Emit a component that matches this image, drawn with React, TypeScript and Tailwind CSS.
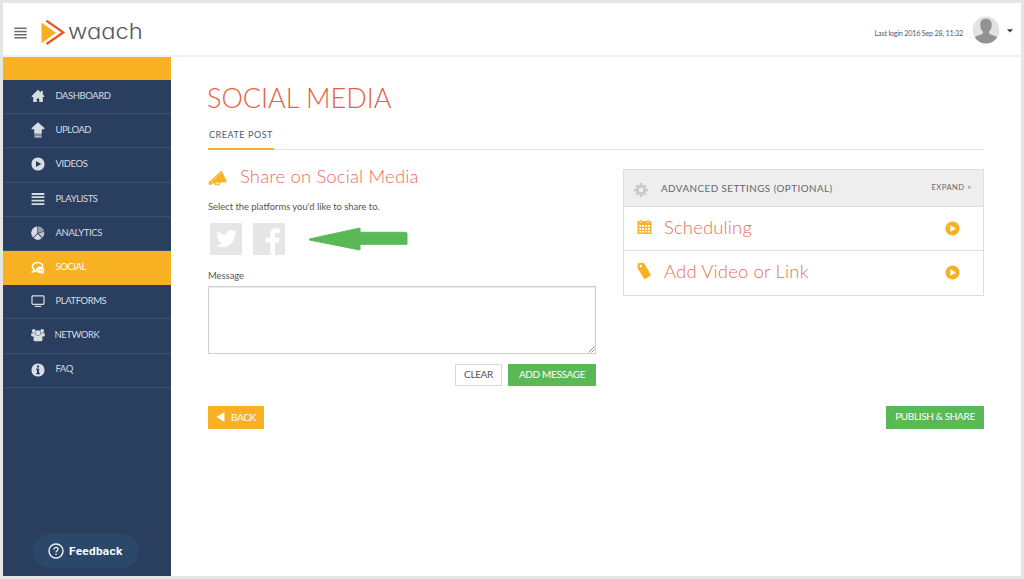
import React from 'react';
import { FaTwitter } from 'react-icons/fa';

const ic = 'h-[14px] w-[14px] shrink-0';

const HomeIcon = () => (
  <svg viewBox="0 0 14 14" className={ic} fill="currentColor">
    <path d="M7 .8.4 7.200l.8.9 1-.1V13h3.600V9.400h2.400V13h3.600V8l1 .1.8-.9-1.800-1.800V2H9.800v1.400z" />
  </svg>
);
const UploadIcon = () => (
  <svg viewBox="0 0 14 16" className="h-4 w-[14px] shrink-0" fill="currentColor">
    <path d="M7 .2.6 6v1.200h2.600v4.600h7.600V7.200h2.600V6zM3.400 12.500h7.200v1H3.400zM3.400 14.300h7.200v1.200H3.400z" />
  </svg>
);
const PlayIcon = ({ className = ic }: { className?: string }) => (
  <svg viewBox="0 0 14 14" className={className} fill="currentColor">
    <path fillRule="evenodd" d="M7 .4a6.600 6.600 0 1 0 0 13.200A6.600 6.600 0 0 0 7 .4zM5 3.900 10.300 7 5 10.100z" />
  </svg>
);
const ListIcon = () => (
  <svg viewBox="0 0 14 14" className={ic} fill="currentColor">
    <path d="M.6 1h12.800v2H.6zM.6 4.300h12.800v1.800H.6zM.6 7.700h12.800v1.800H.6zM.6 11.200h12.800v1.800H.6z" />
  </svg>
);
const PieIcon = () => (
  <svg viewBox="0 0 14 14" className={ic} fill="currentColor">
    <path d="M6.300.6V7.200L1.900 11.400A6.500 6.500 0 0 1 6.300.6z" />
    <path d="M6.700 7.900 2.500 12.100a6.500 6.500 0 0 0 8.300.2z" />
    <path opacity=".6" d="M6.900.5v6.200l6.200-1.500A6.500 6.500 0 0 0 6.900.5z" />
    <path opacity=".85" d="m13.300 5.800-5.900 1.500 4 4.400a6.500 6.500 0 0 0 1.900-5.900z" />
  </svg>
);
const ChatIcon = () => (
  <svg viewBox="0 0 14 14" className={ic}>
    <path d="M11.800 5.600C11.800 3.200 9.500 1.500 6.700 1.500S1.400 3.200 1.400 5.500c0 1.400.8 2.500 2 3.200-.1.8-.7 1.500-1.500 2 1.400 0 2.400-.5 3-1.300" fill="none" stroke="currentColor" strokeWidth="1.600" />
    <path d="M9.200 5.600C6.800 5.600 5 7 5 8.900s1.800 3.300 4.200 3.300l1-.1c.8.700 1.800 1 2.800.9-.5-.5-.8-1-.8-1.700.8-.6 1.200-1.500 1.200-2.400 0-1.900-1.800-3.300-4.200-3.300z" fill="currentColor" />
    <path d="M6.900 8.500h1v1h-1zM8.900 8.500h1v1h-1zM10.900 8.500h1v1h-1z" fill="#f7b122" />
  </svg>
);
const ScreenIcon = () => (
  <svg viewBox="0 0 14 14" className={ic}>
    <rect x="1" y="1.800" width="12" height="8.600" rx=".8" fill="none" stroke="currentColor" strokeWidth="1.200" />
    <path d="M3.800 11.800h6.400v1.200H3.800z" fill="currentColor" />
  </svg>
);
const PeopleIcon = () => (
  <svg viewBox="0 0 14 14" className={ic} fill="currentColor">
    <circle cx="2.800" cy="3" r="1.900" />
    <circle cx="11.200" cy="3" r="1.900" />
    <path d="M.2 5.200h4.200v3.300H1.200Q.2 8.500.2 7.300zM13.800 5.200H9.600v3.300h3.200q1 0 1-1.200z" />
    <circle cx="7" cy="4.800" r="2.600" />
    <path d="M4.600 6.800Q7 8.600 9.400 6.800q2.100.8 2.100 3.700v1.300q0 1.400-1.400 1.400H3.900q-1.400 0-1.400-1.400v-1.300q0-2.900 2.100-3.700z" />
  </svg>
);
const InfoIcon = () => (
  <svg viewBox="0 0 14 14" className={ic} fill="currentColor">
    <path fillRule="evenodd" d="M7 .4a6.600 6.600 0 1 0 0 13.200A6.600 6.600 0 0 0 7 .4zM6 2.400h2.100v2H6zM5.100 5.500h3v4.600h.8v1.200H5.100v-1.200h.9V6.700h-.9z" />
  </svg>
);

const items = [
  { label: 'DASHBOARD', icon: <HomeIcon />, cls: 'tracking-[-0.45px]' },
  { label: 'UPLOAD', icon: <UploadIcon />, cls: 'tracking-[-0.45px]' },
  { label: 'VIDEOS', icon: <PlayIcon />, cls: 'tracking-[-0.4px]' },
  { label: 'PLAYLISTS', icon: <ListIcon />, cls: 'tracking-[-0.4px]' },
  { label: 'ANALYTICS', icon: <PieIcon />, cls: 'tracking-[-0.35px]' },
  { label: 'SOCIAL', icon: <ChatIcon />, cls: 'tracking-[-0.45px]', active: true },
  { label: 'PLATFORMS', icon: <ScreenIcon />, cls: 'tracking-[-0.45px]' },
  { label: 'NETWORK', icon: <PeopleIcon />, cls: 'tracking-[-0.45px] -ml-px' },
  { label: 'FAQ', icon: <InfoIcon />, cls: 'tracking-[-0.45px]' },
];

function Header() {
  return (
    <header className="flex h-[54px] shrink-0 items-center border-b-2 border-[#f1f1f1] pl-[11px] pr-[8px]">
      <svg viewBox="0 0 13 12" className="mt-[8px] h-3 w-[13px]" fill="#6c6c6c">
        <path d="M.3.600h12.400v1.500H.3zM.3 3.700h12.400v1.500H.3zM.3 6.900h12.400v1.500H.3zM.3 10h12.400v1.500H.3z" />
      </svg>
      <svg viewBox="0 0 25 27" className="ml-[14px] mt-[7px] h-[27px] w-[25px]">
        <path d="M.5 3.500v20.700L15 13.700z" fill="#f8b01f" />
        <path d="M5.500 1.800 22.200 13.400 5.500 25" fill="none" stroke="#e8532a" strokeWidth="2.300" />
      </svg>
      <span className="ml-[2px] mt-[3px] origin-left scale-x-[1.08] font-['Inter'] text-[22px] font-light leading-[28px] tracking-[0px] text-[#575757] [font-feature-settings:'cv11']">waach</span>
      <span className="ml-auto mt-[9px] text-[7.300px] leading-[10px] tracking-[-0.25px] text-[#555b6b]">Last login 2016 Sep 28, 11:32</span>
      <svg viewBox="0 0 28 28" className="ml-[9px] mt-[2px] h-7 w-7">
        <defs>
          <clipPath id="avatar"><circle cx="14" cy="14" r="13.400" /></clipPath>
        </defs>
        <g clipPath="url(#avatar)">
          <rect width="28" height="28" fill="#e2e2e2" />
          <path d="M14 2.800c-4.200 0-6 2.700-5.700 6.600.1 2.600 1 4.600 2.600 6v2c-1.500 1.800-7.200 1.600-9.300 5V28h24.800v-5.600c-2.100-3.400-7.800-3.200-9.300-5v-2c1.600-1.400 2.500-3.400 2.600-6 .3-3.900-1.500-6.600-5.700-6.600z" fill="#929292" />
        </g>
      </svg>
      <svg viewBox="0 0 6 4" className="ml-[7px] mt-[4px] h-1 w-[6px]"><path d="M0 .3h6L3 3.500z" fill="#3b3b3b" /></svg>
    </header>
  );
}

function Sidebar() {
  return (
    <aside className="flex w-[168px] shrink-0 flex-col bg-[#2a3f5f]">
      <div className="h-[23px] bg-[#f7b122]" />
      <nav className="flex flex-col">
        {items.map((it) => (
          <a
            key={it.label}
            className={
              it.active
                ? 'flex h-[34.2px] items-center gap-[11px] bg-[#f7b122] pb-px pl-[27.500px] text-[9.500px] text-white'
                : 'flex h-[34.2px] items-center gap-[11px] border-b border-[#3b5070] pb-px pl-[27.500px] text-[9.500px] text-[#d9dce2]'
            }
          >
            {it.icon}
            <span className={it.cls}>{it.label}</span>
          </a>
        ))}
      </nav>
      <button className="mb-[8px] ml-[30px] mt-auto flex h-[34px] w-[106px] items-center gap-[5px] rounded-full bg-[#2b4769] pl-[15px] text-white">
        <svg viewBox="0 0 16 16" className="h-4 w-4" fill="none" stroke="#eef2f6">
          <circle cx="8" cy="8" r="7" strokeWidth="1.400" />
          <path d="M5.900 6.500c0-1.300.9-2.100 2.100-2.100s2.100.8 2.100 1.900c0 1.400-2.100 1.500-2.100 3.100" strokeWidth="1.300" />
          <circle cx="8" cy="11.300" r=".5" fill="#eef2f6" strokeWidth=".5" />
        </svg>
        <span className="mt-px font-['Roboto'] text-[11.800px] font-bold tracking-[0.300px]">Feedback</span>
      </button>
    </aside>
  );
}

const green = 'bg-[#59b957] text-white';

function SharePanel() {
  return (
    <section className="w-[388px]">
      <div className="flex h-[26px] items-center gap-[12px]">
        <svg viewBox="0 0 20 17" className="mt-[2px] h-[17px] w-5" fill="#f7b122">
          <path d="M13.700.6 19 12.200 6.800 12.400 4 14.500 1.200 15 .3 12.400 2.500 10.500z" />
          <path d="M6.200 12.400h6.400l-.8 2.900H7.100zM8 13.200v1h2.800l.3-1z" fillRule="evenodd" />
          <path d="m3.600 11.200 9.600-8" stroke="#fff" strokeWidth=".5" />
          <path d="m2.800 10.600 1.600 3.400" stroke="#fff" strokeWidth=".5" />
        </svg>
        <h2 className="-mt-[2px] text-[18.500px] font-light leading-[24px] tracking-[0.150px] text-[#e8705a]">Share on Social Media</h2>
      </div>
      <p className="mt-[11px] text-[9.400px] leading-[12px] text-[#555]">Select the platforms you'd like to share to.</p>
      <div className="mt-[9px] flex h-[33px] items-center pl-[2px]">
        <span className="flex h-8 w-8 items-center justify-center rounded-[1.500px] bg-[#e6e6e6] text-white">
          <FaTwitter className="h-[21px] w-[21px]" />
        </span>
        <svg viewBox="0 0 32 32" className="ml-[11px] h-8 w-8">
          <rect width="32" height="32" rx="1.500" fill="#e6e6e6" />
          <path d="M17.400 32V19.500h-4.700v-4.800h4.700V11c0-3.700 2.200-5.800 5.600-5.800 1.600 0 2.900.1 3.700.2v4.300h-2.300c-2 0-2.300.9-2.300 2.300v2.700h4.300l-.6 4.800h-3.700V32z" fill="#fff" />
        </svg>
        <svg viewBox="0 0 100 24" className="ml-[23px] h-6 w-[100px]">
          <path d="M1.500 12 52 1v4.300h45.500q1.500 0 1.500 1.500V17.300H52v5.700L1.500 13z" fill="#59b957" stroke="#59b957" strokeLinejoin="round" />
        </svg>
      </div>
      <label className="mt-[15px] block text-[9.400px] leading-[12px] text-[#555]">Message</label>
      <div className="mt-[4px] flex h-[68px] items-end justify-end border border-[#cfcfcf] bg-white shadow-[inset_0_1px_1px_rgba(0,0,0,0.08)]">
        <svg viewBox="0 0 7 7" className="h-[7px] w-[7px]" stroke="#888" strokeWidth=".9">
          <path d="M.5 6.500 6.500.5M3.500 6.500l3-3" />
        </svg>
      </div>
      <div className="mt-[10px] flex justify-end gap-[6px] text-[10px] tracking-[-0.350px]">
        <button className="h-[22px] w-[47px] border border-[#d9d9d9] pb-px text-[#555]">CLEAR</button>
        <button className={`h-[22px] w-[88px] pb-px ${green}`}>ADD MESSAGE</button>
      </div>
    </section>
  );
}

function SettingsPanel() {
  const row = 'flex items-center pl-[13px] pr-[23px]';
  const title = 'text-[18.500px] font-light leading-[24px] tracking-[0.150px] text-[#e8705a] pb-[3px]';
  return (
    <section className="mt-[5px] h-[127px] w-[361px] border border-[#dedede]">
      <div className="flex h-[37px] items-center border-b border-[#dedede] bg-[#eee] pl-[9px] pr-[11px]">
        <svg viewBox="0 0 16 16" className="mt-[3px] h-4 w-4">
          <g stroke="#c9c9c9" strokeWidth="2.600">
            <path d="M8 1v14M1 8h14M3.300 3.300l9.400 9.400M12.700 3.300l-9.400 9.400" />
          </g>
          <circle cx="8" cy="8" r="5" fill="#c9c9c9" />
          <circle cx="8" cy="8" r="2.300" fill="#eee" />
        </svg>
        <span className="ml-[12px] text-[9.800px] tracking-[0.480px] text-[#666]">ADVANCED SETTINGS (OPTIONAL)</span>
        <span className="ml-auto text-[7.600px] tracking-[0.500px] text-[#666]">EXPAND &gt;</span>
      </div>
      <div className={`${row} h-[44px] border-b border-[#dedede]`}>
        <svg viewBox="0 0 15 16" className="-mt-[3px] h-4 w-[15px]">
          <path d="M.5 2h14v13H.5z" fill="#f7b122" />
          <path d="M3 .5h2v3H3zM10 .5h2v3h-2z" fill="#f7b122" stroke="#fff" strokeWidth=".5" />
          <path d="M2.200 6h2v2h-2zM5.100 6h2v2h-2zM8 6h2v2H8zM10.900 6h2v2h-2zM2.200 9h2v2h-2zM5.100 9h2v2h-2zM8 9h2v2H8zM10.900 9h2v2h-2zM2.200 12h2v1.600h-2zM5.100 12h2v1.600h-2zM8 12h2v1.600H8zM10.900 12h2v1.600h-2z" fill="#fff" />
        </svg>
        <h3 className={`${title} ml-[12px]`}>Scheduling</h3>
        <PlayIcon className="ml-auto h-[15px] w-[15px] text-[#f7b122]" />
      </div>
      <div className={`${row} h-[43px]`}>
        <svg viewBox="0 0 15 18" className="-mt-[4px] h-[18px] w-[15px]">
          <path fillRule="evenodd" d="M1.300 1.200 5.900.700q.9 0 1.400.7l6.500 11q.4.800-.4 1.300l-5.200 3.200q-.8.400-1.300-.3L.8 6.500q-.4-.6-.3-1.500l.1-3q0-.7.7-.8zM3.800 2.800a1.300 1.300 0 1 0 .01 2.600 1.300 1.300 0 0 0-.01-2.600z" fill="#f7b122" />
        </svg>
        <h3 className={`${title} ml-[12px]`}>Add Video or Link</h3>
        <PlayIcon className="ml-auto h-[15px] w-[15px] text-[#f7b122]" />
      </div>
    </section>
  );
}

export default function App() {
  return (
    <div className="flex h-[579px] w-[1024px] flex-col overflow-hidden border-[3px] border-[#e5e5e5] bg-white font-['Lato',sans-serif]">
      <Header />
      <div className="flex min-h-0 flex-1">
        <Sidebar />
        <main className="flex-1 pl-[37px] pr-[37px] pt-[24px]">
          <h1 className="-ml-px text-[27px] font-light leading-[34px] text-[#e8603c]">SOCIAL MEDIA</h1>
          <div className="mt-[12px] flex h-[23px] border-b border-[#e3e3e3]">
            <span className="h-[23px] w-[66px] border-b-2 border-[#f7b122] pl-px pt-px text-[9px] leading-[13px] tracking-[0.550px] text-[#4a5a70]">CREATE POST</span>
          </div>
          <div className="mt-[14px] flex justify-between">
            <SharePanel />
            <SettingsPanel />
          </div>
          <div className="mt-[20px] flex justify-between text-[10px] tracking-[-0.350px]">
            <button className="flex h-[23px] w-[56px] items-center gap-[6px] bg-[#f7b122] pb-px pl-[8px] text-white">
              <svg viewBox="0 0 9 10" className="h-[10px] w-[9px]" fill="#fff"><path d="M8.500 0v10L.5 5z" /></svg>
              BACK
            </button>
            <button className={`h-[23px] w-[98px] pb-[2px] ${green}`}>PUBLISH &amp; SHARE</button>
          </div>
        </main>
      </div>
    </div>
  );
}
